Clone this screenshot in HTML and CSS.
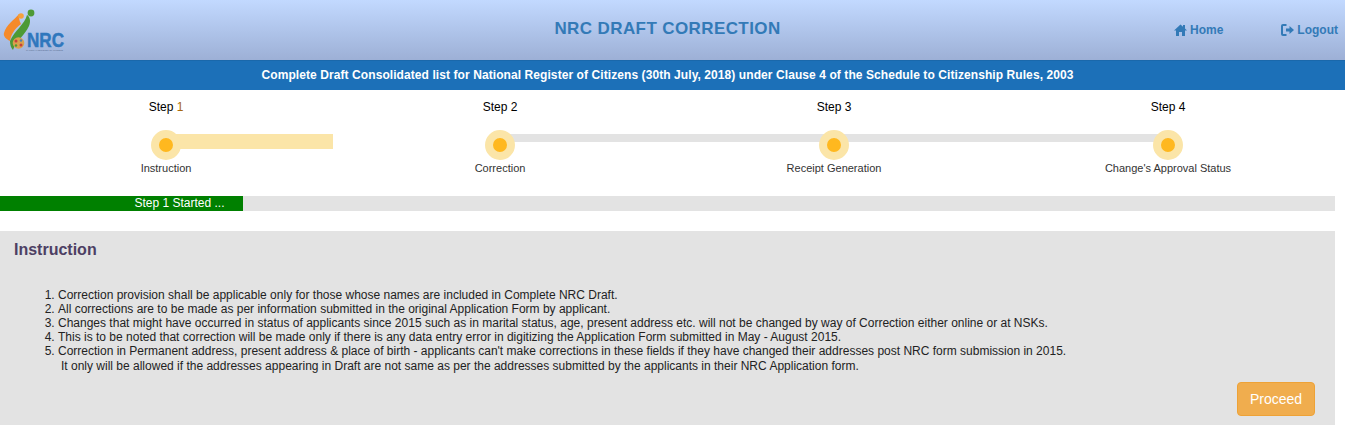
FILE: index.html
```html
<!DOCTYPE html>
<html lang="en">
<head>
<meta charset="utf-8">
<title>NRC Draft Correction</title>
<link rel="stylesheet" href="styles.css">
</head>
<body>
<header class="topbar">
  <svg class="logo" width="80" height="52" viewBox="0 0 80 52">
    <path d="M18 10 C13 16 5 21 3 29 C2 32 5 35 9 37 C10 31 13 25 20 20 C18 17 18 13 18 10 Z" fill="#f58a2a"/>
    <circle cx="20" cy="12" r="2.8" fill="#f5a13c"/>
    <path d="M26 11 C24 20 13 27 9 37 C9 41 10 44 12 46 C15 37 24 31 28 22 C30 17 29 13 26 11 Z" fill="#4d9a35"/>
    <circle cx="30" cy="9" r="3.4" fill="#4d9a35"/>
    <circle cx="17.5" cy="39" r="5.8" fill="#d9a24d"/>
    <circle cx="15" cy="37" r="1.5" fill="#c8413c"/>
    <circle cx="20" cy="41" r="1.5" fill="#c8413c"/>
    <circle cx="20" cy="36.5" r="1.2" fill="#4d80b0"/>
    <circle cx="15" cy="41.5" r="1.2" fill="#4d9a35"/>
    <text x="26" y="43" class="logo-word" textLength="37" lengthAdjust="spacingAndGlyphs">NRC</text>
    <text x="25" y="47" class="logo-sub" textLength="37" lengthAdjust="spacingAndGlyphs">NATIONAL REGISTER OF CITIZENS</text>
  </svg>
  <h1 class="title">NRC DRAFT CORRECTION</h1>
  <nav class="nav">
    <a class="nav-link nav-home">
      <svg width="13" height="12" viewBox="0 0 13 12"><path d="M6.5 0.5 L9 2.8 V1 H11 V4.6 L13 6.5 H11 V12 H8 V8 H5 V12 H2 V6.5 H0 Z" fill="#337ab7"/></svg>
      Home
    </a>
    <a class="nav-link nav-logout">
      <svg width="13" height="12" viewBox="0 0 13 12"><path d="M5.5 1 H2 Q1 1 1 2 V10 Q1 11 2 11 H5.5" fill="none" stroke="#337ab7" stroke-width="2"/><path d="M5 4.5 H8.5 V2 L13 6 L8.5 10 V7.5 H5 Z" fill="#337ab7"/></svg>
      Logout
    </a>
  </nav>
</header>
<div class="subbar">Complete Draft Consolidated list for National Register of Citizens (30th July, 2018) under Clause 4 of the Schedule to Citizenship Rules, 2003</div>
<main class="content">
  <section class="steps">
    <div class="step">
      <div class="step-title">Step <span class="step-num">1</span></div>
      <div class="track"><div class="line line-active"></div><div class="dot"></div></div>
      <div class="step-label">Instruction</div>
    </div>
    <div class="step">
      <div class="step-title">Step 2</div>
      <div class="track"><div class="line"></div><div class="dot"></div></div>
      <div class="step-label">Correction</div>
    </div>
    <div class="step">
      <div class="step-title">Step 3</div>
      <div class="track"><div class="line"></div><div class="dot"></div></div>
      <div class="step-label">Receipt Generation</div>
    </div>
    <div class="step step-last">
      <div class="step-title">Step 4</div>
      <div class="track"><div class="dot"></div></div>
      <div class="step-label">Change's Approval Status</div>
    </div>
  </section>
  <div class="progress"><div class="progress-bar" style="width:243px">Step 1 Started ...</div></div>
  <section class="panel">
    <h2 class="panel-title">Instruction</h2>
    <ol class="rules">
      <li>Correction provision shall be applicable only for those whose names are included in Complete NRC Draft.</li>
      <li>All corrections are to be made as per information submitted in the original Application Form by applicant.</li>
      <li>Changes that might have occurred in status of applicants since 2015 such as in marital status, age, present address etc. will not be changed by way of Correction either online or at NSKs.</li>
      <li>This is to be noted that correction will be made only if there is any data entry error in digitizing the Application Form submitted in May - August 2015.</li>
      <li>Correction in Permanent address, present address &amp; place of birth - applicants can't make corrections in these fields if they have changed their addresses post NRC form submission in 2015.<br><span class="indent">It only will be allowed if the addresses appearing in Draft are not same as per the addresses submitted by the applicants in their NRC Application form.</span></li>
    </ol>
    <div class="actions"><button class="proceed" type="button">Proceed</button></div>
  </section>
</main>
</body>
</html>
```
FILE: styles.css
```css
* { box-sizing: border-box; }
html, body { margin: 0; padding: 0; height: 425px; overflow: hidden; }
body { font-family: "Liberation Sans", Arial, sans-serif; font-size: 12px; color: #333; background: #fff; }

.topbar {
  height: 60px;
  display: flex;
  align-items: center;
  position: relative;
  background: linear-gradient(to bottom, #c2d9ff 0%, #9db0d6 100%);
}
.logo { position: absolute; left: 1px; top: 4px; }
.logo-word { font: bold 21px "Liberation Sans", Arial, sans-serif; fill: #2f77bd; stroke: #2f77bd; stroke-width: 0.5px; }
.logo-sub { font: 2.4px "Liberation Sans", Arial, sans-serif; fill: #5c6f92; }
.title {
  flex: 1;
  margin: 2px 10px 4px 0;
  text-align: center;
  font-size: 17px;
  font-weight: bold;
  letter-spacing: 0.4px;
  color: #337ab7;
}
.nav { position: absolute; top: 22px; right: 7px; display: flex; gap: 58px; }
.nav-link { display: flex; align-items: center; gap: 3px; font-size: 12px; font-weight: bold; color: #337ab7; height: 16px; }

.subbar {
  height: 30px;
  line-height: 28px;
  padding-right: 10px;
  background: #1c70b8;
  color: #fff;
  font-size: 12px;
  font-weight: bold;
  letter-spacing: 0.08px;
  text-align: center;
  border-top: 1px solid #1a68ab;
}

.content { width: 1335px; }
.steps { display: flex; height: 106px; margin-left: -1px; width: 1336px; }
.step { flex: 1; display: flex; flex-direction: column; align-items: center; color: #000; }
.step-title { margin-top: 10px; height: 14px; line-height: 14px; font-size: 12px; }
.step-num { color: #a8680c; }
.track { position: relative; width: 100%; height: 30px; margin-top: 16px; }
.line { position: absolute; left: 50%; top: 4px; width: 100%; height: 8px; background: #e3e3e3; }
.line-active { width: 167px; height: 15px; background: #fbe5a8; }
.step-last .line { display: none; }
.dot {
  position: absolute;
  left: 50%;
  top: 0;
  margin-left: -15px;
  width: 30px;
  height: 30px;
  border-radius: 50%;
  background: #ffb81f;
  border: 8px solid #fbe5a8;
}
.step-label { margin-top: 1px; font-size: 11px; line-height: 14px; color: #333; }

.progress { height: 15px; background: #e3e3e3; }
.progress-bar { height: 15px; line-height: 14px; background: #008000; color: #fff; font-size: 12px; text-align: center; padding-left: 116px; white-space: nowrap; }

.panel { margin-top: 20px; height: 194px; background: #e3e3e3; padding: 9px 14px 0; }
.panel-title { margin: 0; font-size: 16px; line-height: 20px; font-weight: bold; color: #4d3f63; }
.rules { margin: 27.5px 0 0; padding-left: 44px; font-size: 12px; line-height: 14.2px; color: #222; }
.indent { padding-left: 3px; }
.actions { display: flex; justify-content: flex-end; margin-top: 9.5px; padding-right: 6px; }
.proceed {
  width: 78px;
  height: 34px;
  background: #f0ad4e;
  border: 1px solid #eea236;
  border-radius: 4px;
  color: #fff;
  font: 14px "Liberation Sans", Arial, sans-serif;
}
```
